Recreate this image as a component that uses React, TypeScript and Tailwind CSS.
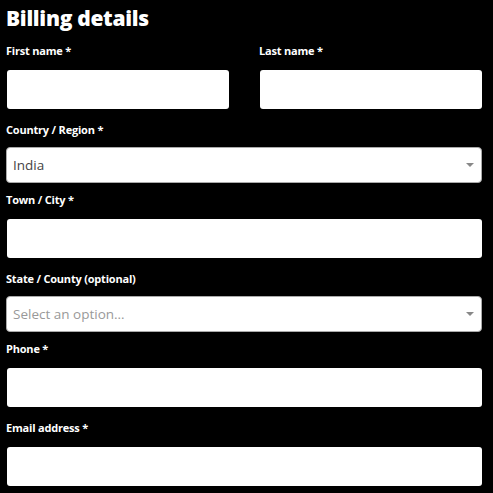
import React from "react";

const font = { fontFamily: '"Open Sans", "Noto Sans", sans-serif' };

function Label({ text }: { text: string }) {
  return (
    <label className="block h-[14px] text-[11px] leading-[14px] font-bold text-white tracking-[-0.2px]">
      {text}
    </label>
  );
}

function TextField({ label }: { label: string }) {
  return (
    <div className="mb-[14px] flex flex-col">
      <Label text={label} />
      <div className="mt-[12px] pl-px">
        <input
          type="text"
          className="block h-[39px] w-full rounded-[3px] bg-white px-3 outline-none"
        />
      </div>
    </div>
  );
}

function SelectField({ label, value, placeholder }: { label: string; value?: string; placeholder?: string }) {
  return (
    <div className="mb-[10px] flex flex-col">
      <Label text={label} />
      <div className="mt-[10px] flex h-[36px] items-center justify-between rounded-[4px] border border-[#aaaaaa] bg-white pl-[6px] pr-[7px]">
        <span className={`text-[13.5px] ${value ? "text-[#444444]" : "text-[#999999]"}`}>
          {value ?? placeholder}
        </span>
        <span className="h-0 w-0 border-x-[4px] border-t-[4px] border-x-transparent border-t-[#888888]" />
      </div>
    </div>
  );
}

export default function App() {
  return (
    <main style={font} className="min-h-[493px] w-[493px] bg-black pl-[6px] pt-[3px]">
      <h1 className="mb-[11px] text-[21px] font-extrabold leading-[30px] tracking-[-0.3px] text-white">
        Billing details
      </h1>

      <div className="w-[476px]">
        <div className="grid grid-cols-2 gap-x-[30px]">
          <TextField label="First name *" />
          <TextField label="Last name *" />
        </div>
        <SelectField label="Country / Region *" value="India" />
        <TextField label="Town / City *" />
        <SelectField label="State / County (optional)" placeholder="Select an option…" />
        <TextField label="Phone *" />
        <TextField label="Email address *" />
      </div>
    </main>
  );
}
